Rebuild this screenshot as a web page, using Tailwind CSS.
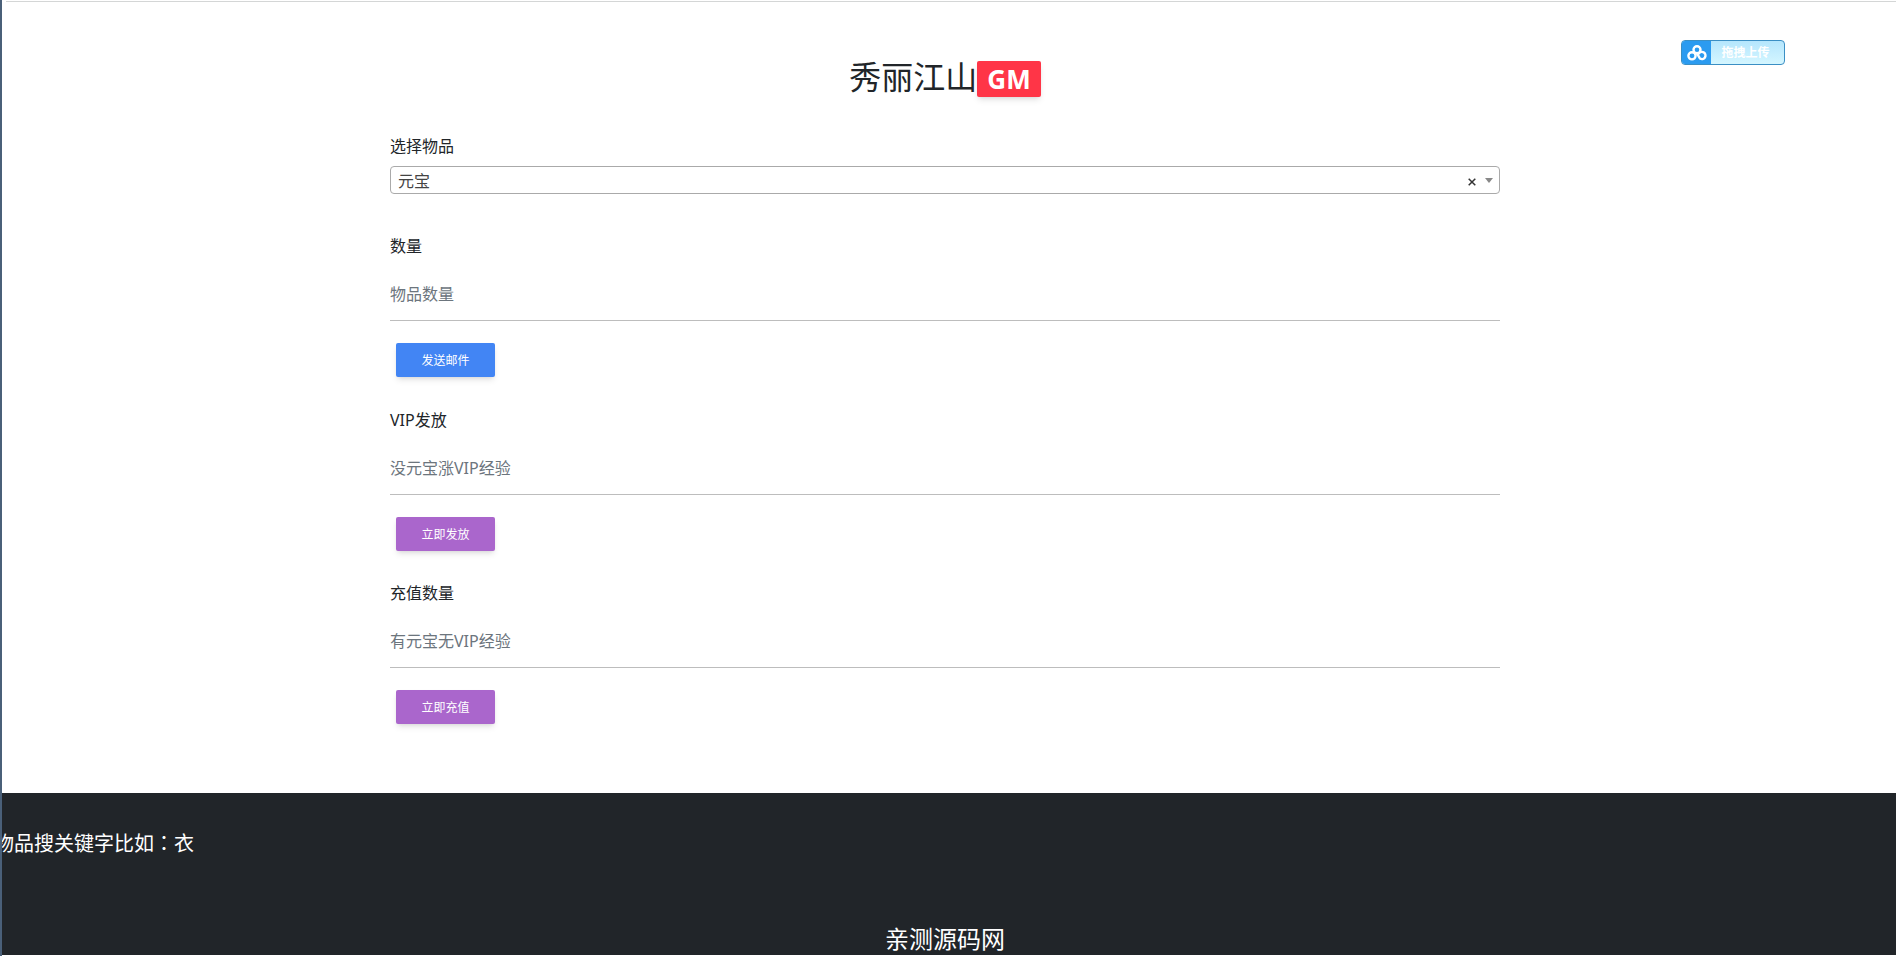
<!DOCTYPE html>
<html lang="zh-CN">
<head>
  <meta charset="UTF-8" />
  <meta name="viewport" content="width=device-width, initial-scale=1.0"/>
  <title>秀丽江山GM</title>
  <script src="https://cdn.jsdelivr.net/npm/@tailwindcss/browser@4"></script>
</head>
<body class="min-h-screen flex flex-col overflow-x-hidden border-l-2 border-[#4a6079] bg-white font-['Noto_Sans','Noto_Sans_CJK_SC',sans-serif] text-base text-[#212529]">

  <div class="mt-px ml-1 h-px bg-[#d4d6d6]"></div>

  <!-- Upload button, floats over the page -->
  <button type="button" class="absolute top-10 right-[111px] flex h-[25px] w-[104px] overflow-hidden rounded-sm border border-[#3b8fc4] bg-linear-to-b from-[#b5e6fd] to-[#d4f6ff] text-xs font-bold text-white">
    <span class="flex h-full w-[29px] items-center justify-center bg-[#2b9bf0]">
      <svg class="h-4 w-5" viewBox="0 0 20 16" fill="none" stroke="#fff" stroke-width="2.4" stroke-linecap="round">
        <circle cx="10" cy="4.8" r="3.5"/>
        <circle cx="5" cy="10.8" r="3.6"/>
        <path d="M12 8.4A3.6 3.6 0 1 1 13 13.6M10 8.4l2.6 4.4"/>
      </svg>
    </span>
    <span class="flex h-full flex-1 items-center justify-center pr-1">拖拽上传</span>
  </button>

  <main class="pr-2">
    <div class="mx-auto max-w-[1110px]">
      <h1 class="flex items-center justify-center pt-[51px] text-[32px] leading-12">
        秀丽江山<span class="mt-1 flex h-9 items-center rounded-xs bg-[#ff3547] px-[10px] text-[26px] font-bold text-white shadow-md">GM</span>
      </h1>

      <form class="pt-[33px] pb-[69px]">
        <label for="item" class="block leading-6">选择物品</label>
        <div class="relative mt-2 mb-10">
          <select id="item" class="block h-7 w-full appearance-none rounded-sm border border-[#aaa] bg-white px-[7px] pt-px text-[#444]">
            <option>元宝</option>
          </select>
          <button type="button" aria-label="清除" class="absolute top-0 right-5 flex h-7 w-4 items-center justify-center">
            <svg class="mt-1 h-2 w-2" viewBox="0 0 8 8" stroke="#333" stroke-width="1.5"><path d="M.7.7l6.6 6.6M7.3.7L.7 7.3"/></svg>
          </button>
          <svg class="pointer-events-none absolute top-3 right-[7px] h-[5px] w-2" viewBox="0 0 8 5" fill="#888"><path d="M0 0h8L4 5z"/></svg>
        </div>

        <label for="num" class="block leading-6">数量</label>
        <input id="num" type="text" placeholder="物品数量" class="mt-[13px] block h-[50px] w-full border-b border-[#bdbdbd] pb-[3px] placeholder:text-[#6c757d]" />
        <button type="button" class="mt-[22px] mb-[31px] ml-[6px] block h-[34px] w-[99px] rounded-xs bg-[#4285f4] pt-px text-xs text-white shadow-md">发送邮件</button>

        <label for="vip" class="block leading-6">VIP发放</label>
        <input id="vip" type="text" placeholder="没元宝涨VIP经验" class="mt-[13px] block h-[50px] w-full border-b border-[#bdbdbd] pb-[3px] placeholder:text-[#6c757d]" />
        <button type="button" class="mt-[22px] mb-[30px] ml-[6px] block h-[34px] w-[99px] rounded-xs bg-[#a6c] pt-px text-xs text-white shadow-md">立即发放</button>

        <label for="charge" class="block leading-6">充值数量</label>
        <input id="charge" type="text" placeholder="有元宝无VIP经验" class="mt-[13px] block h-[50px] w-full border-b border-[#bdbdbd] pb-[3px] placeholder:text-[#6c757d]" />
        <button type="button" class="mt-[22px] ml-[6px] block h-[34px] w-[99px] rounded-xs bg-[#a6c] pt-px text-xs text-white shadow-md">立即充值</button>
      </form>
    </div>
  </main>

  <footer class="mb-[2px] overflow-hidden bg-[#212529] pt-[35px] text-white">
    <p class="-ml-2 text-xl leading-[30px]">物品搜关键字比如<span lang="zh-TW" class="font-['Noto_Sans_CJK_TC',sans-serif]">：</span>衣</p>
    <h2 class="pt-16 pr-2 text-center text-2xl leading-8">亲测源码网</h2>
  </footer>

</body>
</html>
